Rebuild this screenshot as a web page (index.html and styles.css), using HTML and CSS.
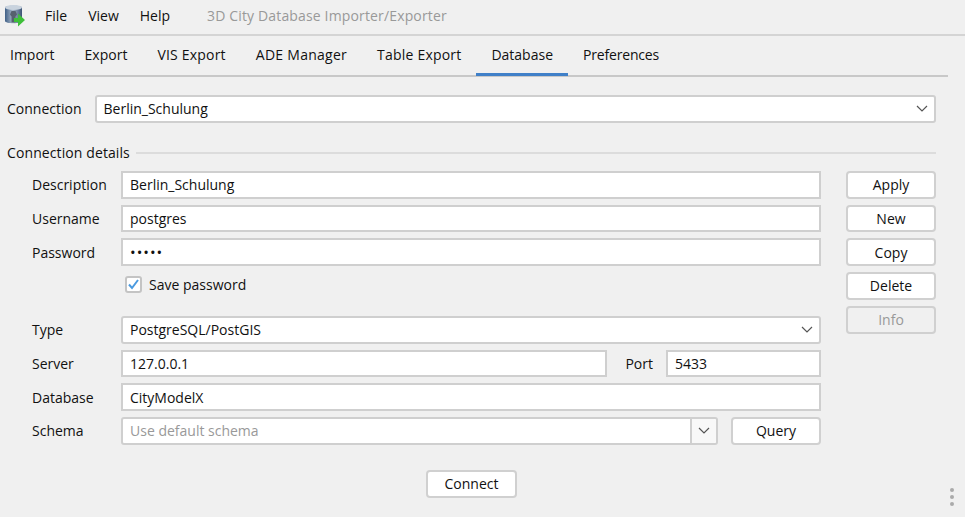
FILE: index.html
```html
<!DOCTYPE html>
<html lang="en">
<head>
  <meta charset="UTF-8">
  <title>3D City Database Importer/Exporter</title>
  <link rel="stylesheet" href="styles.css">
</head>
<body>

  <!-- title bar with menu -->
  <header class="title-bar">
    <svg class="app-icon" width="24" height="24" viewBox="0 0 24 24">
      <defs>
        <linearGradient id="can" x1="0" x2="1" y1="0" y2="0">
          <stop offset="0" stop-color="#3f5f86"/>
          <stop offset="0.45" stop-color="#a9b8c9"/>
          <stop offset="1" stop-color="#3c5475"/>
        </linearGradient>
      </defs>
      <path d="M2 4.500C2 2 19 2 19 4.500V18C19 21 2 21 2 18Z" fill="url(#can)"/>
      <ellipse cx="10.500" cy="4.500" rx="8.500" ry="2.500" fill="#c9d3de"/>
      <path d="M8.500 8h4l1.500 3.500-1.500 2v6h-4v-6L7 11.500z" fill="#56616e"/>
      <path d="M11 15h4v-4.500l7 6.500-7 6.500V19h-4z" fill="#3fbf3a"/>
    </svg>
    <nav class="menu">
      <span>File</span>
      <span>View</span>
      <span>Help</span>
    </nav>
    <span class="app-title">3D City Database Importer/Exporter</span>
  </header>

  <nav class="tabs">
    <a class="tab">Import</a>
    <a class="tab">Export</a>
    <a class="tab vis">VIS Export</a>
    <a class="tab ade">ADE Manager</a>
    <a class="tab table">Table Export</a>
    <a class="tab active">Database</a>
    <a class="tab narrow">Preferences</a>
  </nav>

  <main class="panel">
    <div class="connection-row">
      <label class="connection-label">Connection</label>
      <div class="box select">
        <span class="value">Berlin_Schulung</span>
        <svg class="chevron" width="12" height="7" viewBox="0 0 12 7"><path d="M1 1l5 5 5-5"/></svg>
      </div>
    </div>

    <div class="group-title">
      <span>Connection details</span>
      <div class="group-line"></div>
    </div>

    <div class="details">
      <div class="fields">
        <label>Description</label>
        <div class="box input">Berlin_Schulung</div>
        <label>Username</label>
        <div class="box input">postgres</div>
        <label>Password</label>
        <div class="box input dots">•••••</div>

        <div class="save-row">
          <span class="checkbox">
            <svg width="13" height="13" viewBox="0 0 13 13"><path d="M2 6.500l3 3.500 6-8"/></svg>
          </span>
          <span>Save password</span>
        </div>

        <label>Type</label>
        <div class="box select">
          <span class="value">PostgreSQL/PostGIS</span>
          <svg class="chevron" width="12" height="7" viewBox="0 0 12 7"><path d="M1 1l5 5 5-5"/></svg>
        </div>

        <label>Server</label>
        <div class="field-pair">
          <div class="box input server">127.0.0.1</div>
          <label class="port-label">Port</label>
          <div class="box input port">5433</div>
        </div>

        <label>Database</label>
        <div class="box input">CityModelX</div>

        <label>Schema</label>
        <div class="field-pair">
          <div class="box combo">
            <span class="placeholder">Use default schema</span>
            <span class="combo-arrow">
              <svg class="chevron" width="12" height="7" viewBox="0 0 12 7"><path d="M1 1l5 5 5-5"/></svg>
            </span>
          </div>
          <button type="button" class="btn query">Query</button>
        </div>
      </div>

      <div class="side-buttons">
        <button type="button" class="btn">Apply</button>
        <button type="button" class="btn">New</button>
        <button type="button" class="btn">Copy</button>
        <button type="button" class="btn">Delete</button>
        <button type="button" class="btn" disabled>Info</button>
      </div>
    </div>

    <div class="connect-row">
      <button type="button" class="btn connect">Connect</button>
    </div>
  </main>

  <!-- resize grip -->
  <div class="grip"><i></i><i></i><i></i></div>

</body>
</html>
```

FILE: styles.css
```css
html, body {
  margin: 0;
  padding: 0;
  height: 100%;
  overflow: hidden;
}

body {
  background: #f0f0f0;
  color: #111;
  font-family: "Open Sans", "Noto Sans", sans-serif;
  font-size: 14px;
  position: relative;
}

.title-bar {
  height: 30px;
  padding-bottom: 4px;
  display: flex;
  align-items: center;
  border-bottom: 2px solid #d4d4d4;
}

.app-icon {
  margin-left: 3px;
}

.menu {
  display: flex;
  margin-left: 18px;
  gap: 21px;
}

.app-title {
  margin-left: 37px;
  color: #999;
  letter-spacing: 0.15px;
}

.tabs {
  height: 39px;
  margin-right: 17px;
  display: flex;
  border-bottom: 2px solid #c8c8c8;
}

.tab {
  padding: 0 15px;
  line-height: 38px;
  height: 39px;
}

.tab:first-child {
  padding-left: 10px;
}

.vis {
  letter-spacing: 0.2px;
}

.ade {
  letter-spacing: 0.27px;
}

.table {
  letter-spacing: 0.2px;
}

.narrow {
  letter-spacing: -0.18px;
}

.active {
  height: 37px;
  border-bottom: 3px solid #4080c8;
  margin-bottom: -1px;
}

.panel {
  padding: 18px 29px 0 7px;
}

.box {
  box-sizing: border-box;
  height: 27.75px;
  background: #fff;
  border: 2px solid #cfcfcf;
  display: flex;
  align-items: center;
  padding: 0 7px;
}

.dots {
  font-size: 15px;
  letter-spacing: 1px;
}

.select {
  border-radius: 3px;
  justify-content: space-between;
}

.chevron {
  fill: none;
  stroke: #555;
  stroke-width: 1.2;
  margin-right: -1px;
}

.connection-row {
  display: flex;
  align-items: center;
  gap: 13px;
}

.connection-row .select {
  flex: 1;
}

.group-title {
  display: flex;
  align-items: center;
  gap: 6px;
  margin-top: 20px;
  height: 20px;
  letter-spacing: 0.1px;
}

.group-line {
  flex: 1;
  height: 2px;
  background: #dcdcdc;
}

.details {
  display: flex;
  gap: 25px;
  margin-top: 8px;
  padding-left: 25px;
}

.fields {
  flex: 1;
  display: grid;
  grid-template-columns: 89px 1fr;
  grid-template-rows: repeat(3, 27.75px) 37.75px repeat(4, 27.75px);
  row-gap: 6px;
  align-items: center;
}

.save-row {
  grid-column: 2;
  align-self: start;
  display: flex;
  align-items: center;
  gap: 7px;
  padding-left: 4px;
  height: 25px;
}

.checkbox {
  width: 13px;
  height: 13px;
  border: 2px solid #c4c4c4;
  border-radius: 3px;
  background: #fff;
  display: block;
}

.checkbox svg {
  display: block;
  fill: none;
  stroke: #4a9ae0;
  stroke-width: 2;
}

.field-pair {
  display: flex;
  align-items: center;
}

.server {
  flex: 1;
}

.port-label {
  margin: 0 13px 0 18px;
}

.port {
  width: 155px;
}

.combo {
  flex: 1;
  border-radius: 3px;
  padding-right: 0;
  justify-content: space-between;
}

.placeholder {
  color: #999;
}

.combo-arrow {
  width: 24px;
  height: 100%;
  border-left: 2px solid #cfcfcf;
  background: #f8f8f8;
  display: flex;
  align-items: center;
  justify-content: center;
  border-radius: 0 3px 3px 0;
}

.combo-arrow .chevron {
  margin: 0;
}

.btn {
  box-sizing: border-box;
  width: 90px;
  height: 27.75px;
  padding: 0;
  background: #fff;
  color: #111;
  border: 2px solid #d0d0d0;
  border-radius: 4px;
  font: inherit;
}

.btn:disabled {
  background: #f0f0f0;
  color: #999;
}

.query {
  margin-left: 13px;
}

.side-buttons {
  display: flex;
  flex-direction: column;
  gap: 6px;
}

.connect-row {
  display: flex;
  justify-content: center;
  margin-top: 25px;
}

.connect {
  width: 91px;
}

.grip {
  position: absolute;
  left: 950px;
  top: 488px;
  display: flex;
  flex-direction: column;
  gap: 3px;
}

.grip i {
  display: block;
  width: 4px;
  height: 4px;
  border-radius: 50%;
  background: #aaa;
}
```
